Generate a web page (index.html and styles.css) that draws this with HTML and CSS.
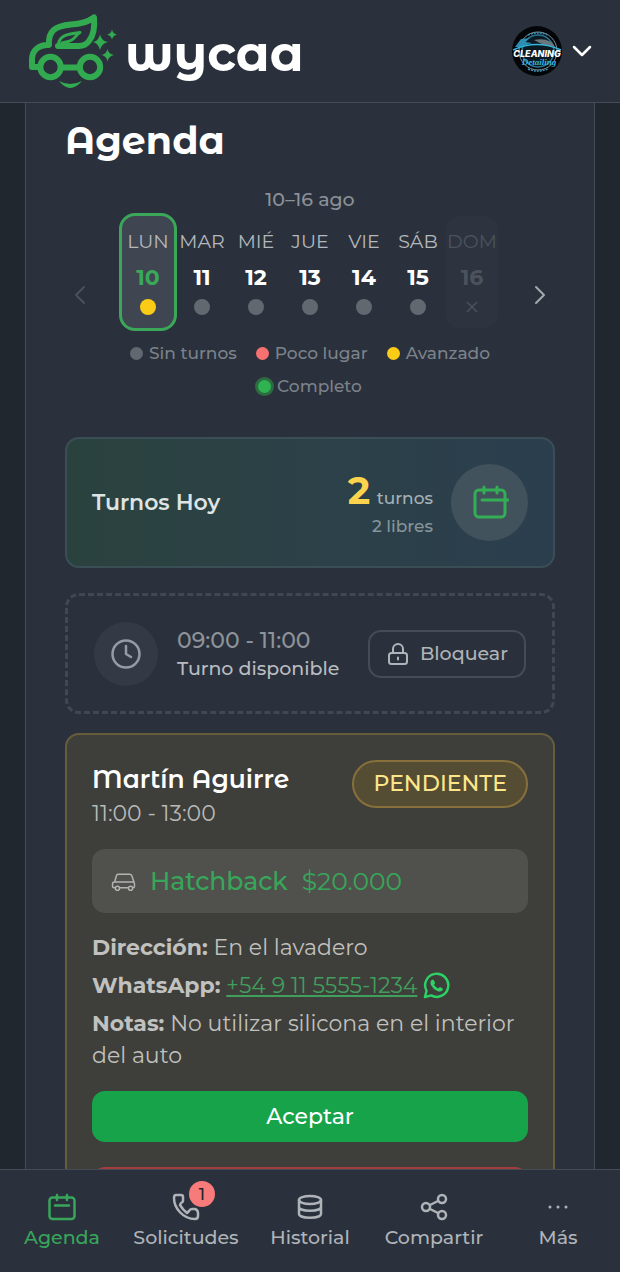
FILE: index.html
```html
<!DOCTYPE html>
<html lang="es">
<head>
  <meta charset="utf-8">
  <meta name="viewport" content="width=device-width, initial-scale=1.0">
  <title>Agenda - wycaa</title>
  <link rel="stylesheet" href="styles.css">
</head>
<body>
  <header class="topbar">
    <a class="brand" href="#">
      <svg class="brand-icon" viewBox="28 13 90 76" fill="none" stroke="#32aa50" stroke-width="6" stroke-linejoin="round" stroke-linecap="round" aria-hidden="true">
        <path d="M38 67H32V59C32 50 40 44 49 45C48 31 55 26 71 24.500C81 24 88 22 94 17.500C95 28 93 36 89 41C86 45 83 46 79 46H58"/>
        <path d="M58.500 44C59.500 36 66 34 80 32.500C75 35 75 41 66 42L62 43" stroke-width="3"/>
        <circle cx="50.500" cy="67" r="10.200"/>
        <circle cx="90" cy="67" r="10.200"/>
        <path d="M62 67.500H79"/>
        <g fill="#32aa50" stroke="none">
          <path d="M59 81Q70 87 82 81Q70 95 59 81Z"/>
          <path d="M100 34.500Q101.500 41 108 42Q101.500 43.500 100 50Q98.500 43.500 93 42Q98.500 41 100 34.500Z"/>
          <path d="M112 29.500Q113 34 117 34.700Q113 35.500 112 39.500Q111 35.500 107 34.700Q111 34 112 29.500Z"/>
          <path d="M107.500 49Q108.500 54 114 55Q108.500 56 107.500 61.500Q106.500 56 101.500 55Q106.500 54 107.500 49Z"/>
        </g>
      </svg>
      <span class="brand-name">wycaa</span>
    </a>
    <button class="account" type="button" aria-label="Cuenta">
      <svg class="avatar" viewBox="0 0 50 50" aria-hidden="true">
        <circle cx="25" cy="25" r="25" fill="#030508"/>
        <circle cx="26" cy="25" r="19" fill="none" stroke="#7f959f" stroke-width="1"/>
        <circle cx="26" cy="25" r="16" fill="#0b1a22" stroke="#2a7896" stroke-width="1.5"/>
        <path d="M16 9Q26 5 36 9" fill="none" stroke="#3b93b3" stroke-width="1.5" stroke-dasharray="2 1"/>
        <path d="M16 43Q26 47 36 43" fill="none" stroke="#3b93b3" stroke-width="1.5" stroke-dasharray="2 1"/>
        <path d="M22 14Q38 11 43 21Q34 21 22 14Z" fill="#69777d"/>
        <path d="M3 21L9 13L18 12L13 16L20 17L9 21Z" fill="#2a8fb2"/>
        <path d="M1 24Q25 13 49 24" fill="none" stroke="#35b4dc" stroke-width="1.5"/>
        <text x="25" y="31" text-anchor="middle" class="avatar-title">CLEANING</text>
        <text x="27" y="39" text-anchor="middle" class="avatar-script">Detailing</text>
      </svg>
      <svg class="chevron" viewBox="0 0 20 20" fill="none" stroke="#fff" stroke-width="2.5" stroke-linecap="round" stroke-linejoin="round" aria-hidden="true"><path d="M2 6L10 14L18 6"/></svg>
    </button>
  </header>

  <main class="page">
    <h1>Agenda</h1>

    <section class="week">
      <p class="week-range">10–16 ago</p>
      <div class="week-row">
        <button class="week-nav prev" type="button" aria-label="Semana anterior" disabled>
          <svg viewBox="0 0 20 20" fill="none" stroke="currentColor" stroke-width="2" stroke-linecap="round" stroke-linejoin="round"><path d="M14 2L6 10L14 18"/></svg>
        </button>
        <div class="days">
          <button class="day active" type="button"><span>LUN</span><b>10</b><i class="dot yellow"></i></button>
          <button class="day" type="button"><span>MAR</span><b>11</b><i class="dot"></i></button>
          <button class="day" type="button"><span>MIÉ</span><b>12</b><i class="dot"></i></button>
          <button class="day" type="button"><span>JUE</span><b>13</b><i class="dot"></i></button>
          <button class="day" type="button"><span>VIE</span><b>14</b><i class="dot"></i></button>
          <button class="day" type="button"><span>SÁB</span><b>15</b><i class="dot"></i></button>
          <button class="day closed" type="button" disabled>
            <span>DOM</span><b>16</b>
            <svg class="cross" viewBox="0 0 16 16" stroke="currentColor" stroke-width="1.5" aria-hidden="true"><path d="M3 3L13 13M13 3L3 13"/></svg>
          </button>
        </div>
        <button class="week-nav next" type="button" aria-label="Semana siguiente">
          <svg viewBox="0 0 20 20" fill="none" stroke="currentColor" stroke-width="2" stroke-linecap="round" stroke-linejoin="round"><path d="M6 2L14 10L6 18"/></svg>
        </button>
      </div>
      <ul class="legend">
        <li><i class="dot"></i>Sin turnos</li>
        <li><i class="dot red"></i>Poco lugar</li>
        <li><i class="dot yellow"></i>Avanzado</li>
        <li><i class="dot green"></i>Completo</li>
      </ul>
    </section>

    <section class="today">
      <h2>Turnos Hoy</h2>
      <div class="today-count">
        <p><b>2</b> turnos</p>
        <p class="free">2 libres</p>
      </div>
      <div class="today-icon">
        <svg viewBox="0 0 38 38" fill="none" stroke="currentColor" stroke-width="3" stroke-linecap="round" stroke-linejoin="round" aria-hidden="true">
          <rect x="4" y="6" width="30" height="27" rx="4"/>
          <path d="M13 3V9M26 3V9M11 16H37"/>
        </svg>
      </div>
    </section>

    <section class="slot">
      <div class="slot-icon">
        <svg viewBox="0 0 32 32" fill="none" stroke="currentColor" stroke-width="2.5" stroke-linecap="round" stroke-linejoin="round" aria-hidden="true"><circle cx="16" cy="16" r="13.500"/><path d="M16 8V16L21 19"/></svg>
      </div>
      <div class="slot-text">
        <p class="slot-time">09:00 - 11:00</p>
        <p class="slot-state">Turno disponible</p>
      </div>
      <button class="block-btn" type="button">
        <svg viewBox="0 0 22 24" fill="none" stroke="currentColor" stroke-width="2" stroke-linecap="round" stroke-linejoin="round" aria-hidden="true"><rect x="2" y="11" width="18" height="11" rx="2.500"/><path d="M6 11V7A5 5 0 0 1 16 7V11M11 15.500V17.500"/></svg>
        Bloquear
      </button>
    </section>

    <article class="booking">
      <div class="booking-head">
        <div>
          <h2>Martín Aguirre</h2>
          <p class="booking-time">11:00 - 13:00</p>
        </div>
        <span class="status">PENDIENTE</span>
      </div>
      <div class="service">
        <svg viewBox="0 0 24 20" fill="none" stroke="currentColor" stroke-width="1.4" stroke-linecap="round" stroke-linejoin="round" aria-hidden="true">
          <path d="M4 16H3Q1.500 16 1.500 14.500V12Q1.500 10.500 3.500 10.500L5.200 4.500Q5.500 3 7 3H18Q19.500 3 20 4.500L22.500 12V15Q22.500 16 21 16M8.500 16H16.500M3.500 10.500H22"/>
          <circle cx="6.200" cy="16.500" r="2"/><circle cx="18.800" cy="16.500" r="2"/>
        </svg>
        <span class="service-name">Hatchback</span>
        <span class="service-price">$20.000</span>
      </div>
      <div class="details">
        <p><b>Dirección:</b> En el lavadero</p>
        <p><b>WhatsApp:</b> <a href="https://wa.me/5491155551234">+54 9 11 5555-1234</a>
          <svg class="wa" viewBox="0 0 28 28" fill="none" aria-hidden="true"><path d="M2 26L3.700 19.500A12 12 0 1 1 8.500 24.300Z" stroke="#2bd366" stroke-width="2.5" stroke-linejoin="round"/><path d="M8 9.500Q9 7.500 10.500 8L11.300 8.500L12.500 11.500Q12.300 12.500 11.300 13.300Q13 16 16 17.200L17.500 15.600L20.500 17Q21 18 19.800 19.500Q18 21 15 19.800Q10.500 18 8.200 13.500Q7.300 11.500 8 9.500Z" fill="#2bd366"/></svg>
        </p>
        <p><b>Notas:</b> No utilizar silicona en el interior del auto</p>
      </div>
      <button class="btn accept" type="button">Aceptar</button>
      <button class="btn reject" type="button" aria-label="Rechazar"></button>
    </article>
  </main>

  <nav class="tabbar">
    <a class="tab current" href="#">
      <svg viewBox="0 0 28 28" fill="none" stroke="currentColor" stroke-width="2.5" stroke-linecap="round" stroke-linejoin="round" aria-hidden="true"><rect x="1.500" y="4.500" width="25" height="21.500" rx="3"/><path d="M9 2V7M19 2V7M7 12.500H21"/></svg>
      Agenda
    </a>
    <a class="tab" href="#">
      <svg viewBox="0 0 28 28" fill="none" stroke="currentColor" stroke-width="2.5" stroke-linecap="round" stroke-linejoin="round" aria-hidden="true"><path d="M4 2H9Q11 2 11 4V8Q11 9 9 10L8 12Q11 17 15 20L17 18Q18 16 20 16H23Q26 17 26 20V23Q26 26 23 26C11 26 2 15 2 5Q2 2 4 2Z"/></svg>
      Solicitudes
      <span class="badge">1</span>
    </a>
    <a class="tab" href="#">
      <svg viewBox="0 0 28 28" fill="none" stroke="currentColor" stroke-width="2.5" stroke-linecap="round" aria-hidden="true"><ellipse cx="14" cy="7" rx="11" ry="4"/><path d="M3 7V21C3 26 25 26 25 21V7M3 14C3 19 25 19 25 14"/></svg>
      Historial
    </a>
    <a class="tab" href="#">
      <svg viewBox="0 0 28 28" fill="none" stroke="currentColor" stroke-width="2.5" stroke-linecap="round" aria-hidden="true"><circle cx="6" cy="14" r="4"/><circle cx="22" cy="6" r="4"/><circle cx="22" cy="22" r="4"/><path d="M10 12L18 8M10 16L18 20"/></svg>
      Compartir
    </a>
    <a class="tab" href="#">
      <svg viewBox="0 0 28 28" fill="currentColor" aria-hidden="true"><circle cx="6" cy="14" r="1.500"/><circle cx="14" cy="14" r="1.500"/><circle cx="22" cy="14" r="1.500"/></svg>
      Más
    </a>
  </nav>
</body>
</html>
```
FILE: styles.css
```css
* {
  box-sizing: border-box;
}

html, body {
  margin: 0;
  height: 100%;
}

body {
  display: flex;
  flex-direction: column;
  overflow: hidden;
  background: #20272f;
  color: #fff;
  font-family: Montserrat, Inter, "Open Sans", sans-serif;
  font-size: 19px;
  font-weight: 500;
  line-height: 28px;
}

h1, h2, p, ul {
  margin: 0;
  padding: 0;
}

button {
  padding: 0;
  border: 0;
  background: none;
  color: inherit;
  font: inherit;
}

svg {
  display: block;
  flex: none;
}

/* header */
.topbar {
  flex: none;
  display: flex;
  align-items: center;
  justify-content: space-between;
  height: 103px;
  padding: 0 28px;
  border-bottom: 1px solid #454c56;
  background: #2a313c;
}

.brand {
  display: flex;
  align-items: center;
  gap: 7px;
  color: #fff;
  text-decoration: none;
}

.brand-icon {
  width: 90px;
  height: 76px;
}

.brand-name {
  padding-top: 6px;
  font-family: "Montserrat Alternates", Inter, sans-serif;
  font-size: 49px;
  font-weight: 700;
  line-height: 64px;
}

.account {
  display: flex;
  align-items: center;
  gap: 10px;
}

.avatar {
  width: 50px;
  height: 50px;
}

.avatar-title {
  fill: #fff;
  font: italic 800 9px Inter, sans-serif;
}

.avatar-script {
  fill: #35b4dc;
  font: italic 700 9px "Liberation Serif", serif;
}

.chevron {
  width: 20px;
  height: 20px;
}

/* content */
.page {
  flex: 1;
  min-height: 0;
  overflow-y: auto;
  scrollbar-width: none;
  margin: 0 25px;
  padding: 16px 39px 0;
  border: solid #454c56;
  border-width: 0 1px;
  background: #2a313c;
}

h1 {
  font-family: "Montserrat Alternates", Inter, sans-serif;
  font-size: 38px;
  font-weight: 700;
  line-height: 44px;
}

.week {
  margin: 23px 0 37px;
}

.week-range {
  color: #8c9198;
  line-height: 27px;
  text-align: center;
}

.week-row {
  display: flex;
  align-items: center;
  justify-content: space-between;
}

.week-nav {
  display: flex;
  justify-content: center;
  width: 30px;
  padding-top: 46px;
  color: #a5a9ae;
}

.week-nav svg {
  width: 20px;
  height: 20px;
}

.week-nav.prev {
  color: #4a515b;
}

.days {
  display: grid;
  grid-template-columns: repeat(7, 54px);
}

.day {
  display: flex;
  flex-direction: column;
  align-items: center;
  margin: 0 -2px;
  height: 118px;
  padding-top: 12px;
  border: 3px solid transparent;
  border-radius: 16px;
}

.day span {
  color: #b4b7bb;
  font-weight: 400;
}

.day b {
  padding: 8px 0 7px;
  font-size: 22px;
}

.day.active {
  border-color: #3aa858;
  background: #3f4651;
}

.day.active b {
  color: #3aa858;
}

.day.closed {
  background: #2d343f;
  background-clip: padding-box;
}

.day.closed span,
.day.closed b,
.day.closed .cross {
  color: #4c525c;
}

.dot {
  flex: none;
  width: 16px;
  height: 16px;
  border-radius: 50%;
  background: #626870;
}

.yellow {
  background: #facc15;
}

.red {
  background: #f87171;
}

.green {
  background: #2fb350;
  box-shadow: 0 0 0 3px #2d6b42;
}

.cross {
  width: 16px;
  height: 16px;
}

.legend {
  display: flex;
  flex-wrap: wrap;
  justify-content: center;
  gap: 5px 19px;
  margin-top: 8px;
  padding: 0 48px;
  color: #7c828a;
  font-size: 17px;
  list-style: none;
}

.legend li {
  display: flex;
  align-items: center;
  gap: 6px;
}

.legend .dot {
  width: 13px;
  height: 13px;
}

/* today summary */
.today {
  display: flex;
  align-items: center;
  height: 131px;
  padding: 0 25px;
  border: 2px solid #394f55;
  border-radius: 14px;
  background: linear-gradient(to right, #2a423e, #2c4148 50%, #2b3e4e);
}

.today h2 {
  margin-right: auto;
  color: #dee3e3;
  font-size: 22px;
  font-weight: 600;
}

.today-count {
  margin-right: 18px;
  padding-top: 6px;
  color: #a6b1b5;
  font-size: 17px;
  text-align: right;
}

.today-count b {
  margin-right: 2px;
  color: #fcd34d;
  font-size: 38px;
  line-height: 38px;
}

.today-count .free {
  color: #87959a;
}

.today-icon {
  display: flex;
  align-items: center;
  justify-content: center;
  width: 77px;
  height: 77px;
  border-radius: 50%;
  background: #41525d;
  color: #34ad55;
}

.today-icon svg {
  width: 38px;
  height: 38px;
}

/* free slot */
.slot {
  display: flex;
  align-items: center;
  height: 121px;
  margin: 25px 0 19px;
  padding: 0 26px;
  border: 3px dashed #414852;
  border-radius: 14px;
}

.slot-icon {
  display: flex;
  align-items: center;
  justify-content: center;
  width: 64px;
  height: 64px;
  margin-right: 19px;
  border-radius: 50%;
  background: #333a46;
  color: #959ba4;
}

.slot-icon svg {
  width: 32px;
  height: 32px;
}

.slot-text {
  padding-top: 2px;
}

.slot-time {
  color: #8e939a;
  font-size: 22px;
}

.slot-state {
  color: #b9bcc0;
}

.block-btn {
  display: flex;
  align-items: center;
  gap: 11px;
  height: 48px;
  margin-left: auto;
  padding: 0 16px 0 17px;
  border: 2px solid #454c56;
  border-radius: 13px;
  color: #b0b4b9;
}

.block-btn svg {
  width: 22px;
  height: 24px;
}

/* booking card */
.booking {
  padding: 25px;
  border: 2px solid #665d3d;
  border-radius: 14px;
  background: #3e3e3a;
}

.booking-head {
  display: flex;
  align-items: flex-start;
  justify-content: space-between;
}

.booking h2 {
  font-family: "Montserrat Alternates", Inter, sans-serif;
  font-size: 25px;
  font-weight: 600;
  line-height: 38px;
}

.booking-time {
  color: #b9b9b7;
  font-size: 22px;
  font-weight: 400;
  line-height: 32px;
}

.status {
  height: 48px;
  padding: 0 19px;
  border: 2px solid #88703a;
  border-radius: 24px;
  background: #554c34;
  color: #fde68a;
  font-size: 22px;
  line-height: 44px;
}

.service {
  display: flex;
  align-items: center;
  height: 64px;
  margin: 19px 0;
  padding: 0 19px;
  border-radius: 13px;
  background: #50514c;
  color: #b4b5b2;
  font-size: 25px;
}

.service svg {
  width: 25px;
  height: 21px;
}

.service-name,
.service-price {
  margin-left: 14px;
  color: #38a65a;
}

.service-price {
  font-weight: 400;
}

.details {
  display: flex;
  flex-direction: column;
  gap: 6px;
  color: #c1c1bf;
  font-size: 22px;
  font-weight: 400;
  line-height: 32px;
}

.details a {
  color: #419f5d;
}

.wa {
  display: inline-block;
  width: 27px;
  height: 27px;
  vertical-align: -6px;
}

.btn {
  display: block;
  width: 100%;
  height: 51px;
  margin-top: 19px;
  border-radius: 13px;
  font-size: 22px;
}

.accept {
  background: #16a34a;
}

.reject {
  margin-top: 25px;
  background: #a33c3c;
}

/* bottom navigation */
.tabbar {
  flex: none;
  display: grid;
  grid-template-columns: repeat(5, 1fr);
  height: 103px;
  padding-top: 23px;
  border-top: 1px solid #454c56;
  background: #2a313c;
}

.tab {
  position: relative;
  display: flex;
  flex-direction: column;
  align-items: center;
  gap: 3px;
  color: #b0b4b9;
  text-decoration: none;
}

.tab svg {
  width: 28px;
  height: 28px;
}

.tab.current {
  color: #38a65a;
}

.badge {
  position: absolute;
  top: -12px;
  left: 50%;
  width: 26px;
  height: 26px;
  margin-left: 3px;
  border-radius: 50%;
  background: #f87b7b;
  color: #20272f;
  font-size: 17px;
  line-height: 26px;
  text-align: center;
}
```
